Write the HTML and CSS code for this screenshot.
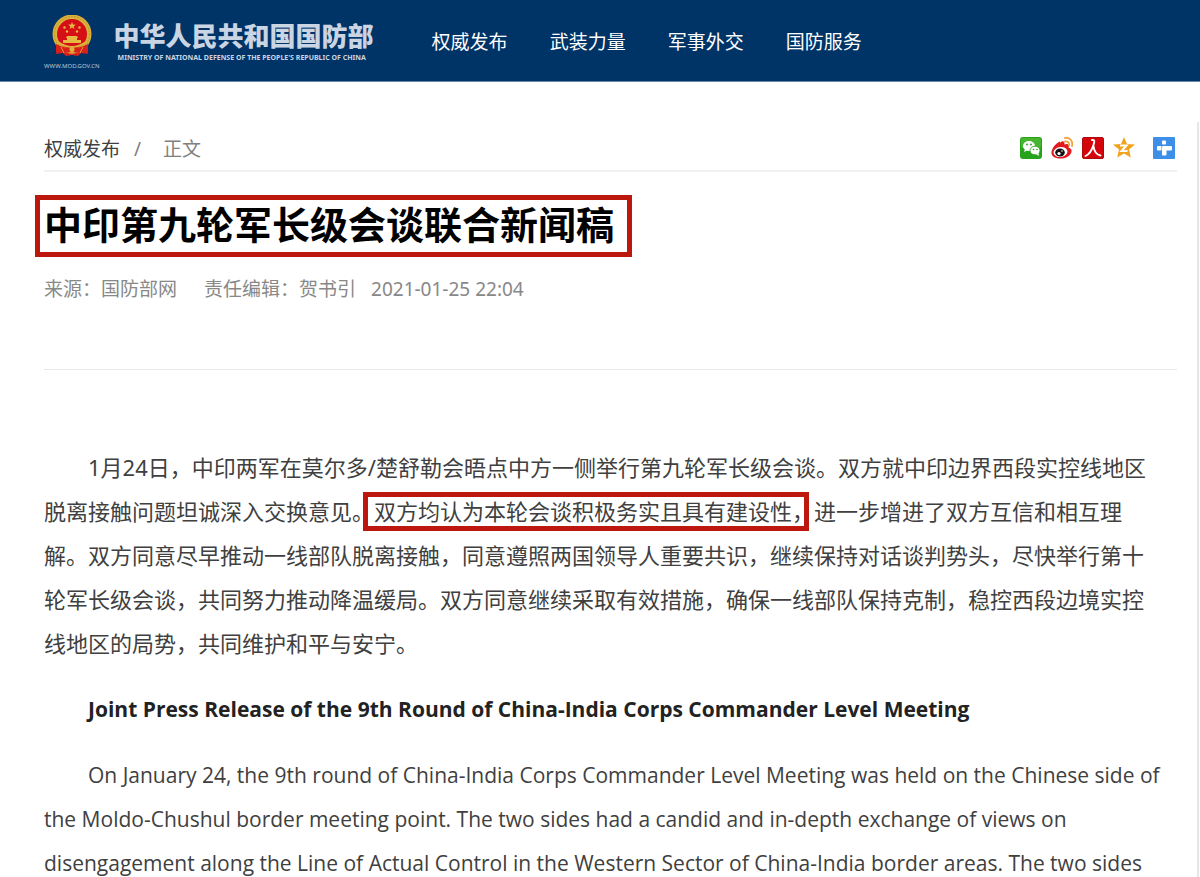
FILE: index.html
```html
<!DOCTYPE html>
<html lang="zh-CN">
<head>
<meta charset="UTF-8" />
<meta name="viewport" content="width=device-width, initial-scale=1" />
<title>中印第九轮军长级会谈联合新闻稿</title>
<link rel="stylesheet" href="styles.css">
</head>
<body>

<header class="site-header">
  <a class="brand" href="#">
    <span class="brand-emblem">
      <svg class="emblem" viewBox="0 0 40 42" aria-hidden="true">
        <path d="M6 29 L4 39 L11 38 L14 41 L20 40 L26 41 L29 38 L36 39 L34 29 Z" fill="#d8201c"/>
        <circle cx="20" cy="19" r="19.5" fill="#d9b13c"/>
        <circle cx="20" cy="19" r="17.5" fill="none" stroke="#c0962c" stroke-width="1" stroke-dasharray="2 1"/>
        <circle cx="20" cy="19" r="15" fill="#d60f16"/>
        <path d="M20 7 l1 2.600 2.800 .1 -2.200 1.700 .8 2.700 -2.400 -1.600 -2.400 1.600 .8 -2.700 -2.200 -1.700 2.800 -.1z" fill="#e8b845"/>
        <g fill="#e8b845">
          <circle cx="12.500" cy="12.500" r="1.200"/>
          <circle cx="27.500" cy="12.500" r="1.200"/>
          <circle cx="15" cy="16.500" r="1.200"/>
          <circle cx="25" cy="16.500" r="1.200"/>
          <path d="M15 21 h10 l1 2 h-1 v2 h4 v3 h-18 v-3 h4 v-2 h-1z"/>
        </g>
        <path d="M4 29 Q12 33 18 33 L20 32 L22 33 Q28 33 36 29 L36 37 Q26 38 20 37 Q14 38 4 37Z" fill="#d8201c"/>
        <path d="M6 27 Q13 32 20 32 Q27 32 34 27" fill="none" stroke="#e0b03c" stroke-width="2"/>
        <circle cx="20" cy="34.500" r="2.500" fill="#e2b33b"/>
        <path d="M9 32 l3 6 M31 32 l-3 6 M17 38 h6" stroke="#e2a034" stroke-width="1"/>
      </svg>
      <span class="brand-url">WWW.MOD.GOV.CN</span>
    </span>
    <span class="brand-name">
      <span class="brand-cn">中华人民共和国国防部</span>
      <span class="brand-en">MINISTRY OF NATIONAL DEFENSE OF THE PEOPLE'S REPUBLIC OF CHINA</span>
    </span>
  </a>
  <nav class="main-nav">
    <a href="#">权威发布</a>
    <a href="#">武装力量</a>
    <a href="#">军事外交</a>
    <a href="#">国防服务</a>
  </nav>
</header>

<main class="page">
  <div class="top-bar">
    <div class="breadcrumb">
      <a href="#">权威发布</a>
      <span class="slash">/</span>
      <span>正文</span>
    </div>

    <!-- Share buttons -->
    <div class="share">
      <a href="#" aria-label="微信">
        <svg viewBox="0 0 22 22">
          <rect width="22" height="22" rx="3" fill="#27a31b"/>
          <rect x="1" y="1" width="20" height="10" rx="2" fill="#47b52f"/>
          <ellipse cx="9" cy="9" rx="6" ry="5" fill="#fff"/>
          <path d="M5 12 l-1 3 4 -2z" fill="#fff"/>
          <ellipse cx="15" cy="13.500" rx="5" ry="4.300" fill="#fff" stroke="#27a31b" stroke-width=".8"/>
          <path d="M16 17 l3 2 -.5 -3z" fill="#fff"/>
          <g fill="#27a31b">
            <circle cx="7" cy="7.500" r=".9"/>
            <circle cx="11" cy="7.500" r=".9"/>
            <circle cx="13.500" cy="12.500" r=".8"/>
            <circle cx="17" cy="12.500" r=".8"/>
          </g>
        </svg>
      </a>
      <a href="#" aria-label="新浪微博">
        <svg viewBox="0 0 22 22">
          <path d="M9 6 C11 3 14 4 13.500 7.500 C17 6 19 8 17.500 10.500 C20 11.500 21 13 20.500 15 C19 20 13 22 8 21.500 C3 21 0 18.500 .5 15 C1 11 5 6 9 4.500 Z" fill="#e2191f"/>
          <ellipse cx="9.500" cy="15" rx="7" ry="5" fill="#fff" transform="rotate(-8 9.500 15)"/>
          <ellipse cx="9" cy="15.500" rx="4.800" ry="4" fill="#111"/>
          <circle cx="8" cy="16.500" r="1.600" fill="#fff"/>
          <circle cx="11" cy="14" r=".8" fill="#fff"/>
          <path d="M14 1 C19 0 22 4 21 9 M14 4.500 C17 4 18.500 6 18 8.500" fill="none" stroke="#f0a43a" stroke-width="1.800" stroke-linecap="round"/>
        </svg>
      </a>
      <a href="#" aria-label="人民微博">
        <svg viewBox="0 0 22 22">
          <rect x=".5" y=".5" width="21" height="21" rx="1.500" fill="#d5040b" stroke="#a90a0d"/>
          <path d="M10 3 C13 2.500 12.500 5 11.500 8 C10 13 8 17 3.500 19 M11.500 9 C12 14 14 17.500 18.500 18.500" fill="none" stroke="#fff" stroke-width="1.900" stroke-linecap="round"/>
        </svg>
      </a>
      <a href="#" aria-label="QQ空间">
        <svg viewBox="0 0 22 22">
          <path d="M11 0 L14 7 L22 7.500 L16 12.500 L17.800 20.500 L11 16.500 L4.200 20.500 L6 12.500 L0 7.500 L8 7 Z" fill="#f2a31d"/>
          <path d="M7 8.500 H13.500 L8.500 14 H14.500" fill="none" stroke="#fff" stroke-width="2"/>
        </svg>
      </a>
      <a class="share-more" href="#" aria-label="更多">
        <svg viewBox="0 0 22 22">
          <rect width="22" height="22" rx="1" fill="#3d8fe8"/>
          <rect x="9" y="3.500" width="4" height="4" rx="1" fill="#fff"/>
          <rect x="4" y="9" width="4.500" height="4.500" rx="1" fill="#fff"/>
          <path d="M10 9 h8 a1 1 0 0 1 1 1 v2.500 a1 1 0 0 1 -1 1 h-4.500 v4 a1 1 0 0 1 -1 1 h-2.500 a1 1 0 0 1 -1 -1 v-7.500 a1 1 0 0 1 1 -1z" fill="#fff"/>
        </svg>
      </a>
    </div>
  </div>

  <h1 class="title">中印第九轮军长级会谈联合新闻稿</h1>
  <div class="meta">
    <span class="source">来源：国防部网</span>
    <span class="editor">责任编辑：贺书引</span>
    <time datetime="2021-01-25T22:04">2021-01-25 22:04</time>
  </div>

  <article class="article">
    <p>1月24日，中印两军在莫尔多/楚舒勒会晤点中方一侧举行第九轮军长级会谈。双方就中印边界西段实控线地区脱离接触问题坦诚深入交换意见。<span class="marked">双方均认为本轮会谈积极务实且具有建设性，</span>进一步增进了双方互信和相互理解。双方同意尽早推动一线部队脱离接触，同意遵照两国领导人重要共识，继续保持对话谈判势头，尽快举行第十轮军长级会谈，共同努力推动降温缓局。双方同意继续采取有效措施，确保一线部队保持克制，稳控西段边境实控线地区的局势，共同维护和平与安宁。</p>
    <p class="en" lang="en"><strong>Joint Press Release of the 9th Round of China-India Corps Commander Level Meeting</strong></p>
    <p class="en" lang="en">On January 24, the 9th round of China-India Corps Commander Level Meeting was held on the Chinese side of the Moldo-Chushul border meeting point. The two sides had a candid and in-depth exchange of views on disengagement along the Line of Actual Control in the Western Sector of China-India border areas. The two sides</p>
  </article>
</main>

</body>
</html>
```

FILE: styles.css
```css
* {
  box-sizing: border-box;
}
body {
  margin: 0;
  font-family: "Noto Sans", "Noto Sans CJK SC", sans-serif;
  background: #fff;
  color: #404040;
}
a {
  color: inherit;
  text-decoration: none;
}

/* Header */
.site-header {
  display: flex;
  align-items: center;
  gap: 58px;
  height: 82px;
  padding: 0 44px;
  background: #003366;
  border-bottom: 1px solid #6685a8;
  color: #fff;
}
.brand {
  display: flex;
  gap: 14px;
  padding-top: 4px;
}
.brand-emblem {
  display: flex;
  flex-direction: column;
  align-items: center;
  color: #b9c8d8;
}
.emblem {
  width: 40px;
  height: 42px;
}
.brand-url {
  margin-top: 4px;
  font-size: 6px;
  line-height: 10px;
}
.brand-name {
  display: flex;
  flex-direction: column;
  padding-top: 4px;
  color: #c9d5e2;
}
.brand-cn {
  font-family: "Noto Sans CJK SC", sans-serif;
  font-size: 26px;
  font-weight: 900;
  line-height: 32px;
}
.brand-en {
  margin-top: 2px;
  padding-left: 4px;
  font-size: 7px;
  font-weight: 700;
  line-height: 10px;
  white-space: nowrap;
}
.main-nav {
  display: flex;
  gap: 42px;
  font-size: 19px;
}

/* Page column */
.page {
  margin: 40px 1px 0 0;
  padding: 0 20px 0 44px;
  border-right: 2px solid #e6e6e6;
}
.top-bar {
  display: flex;
  justify-content: space-between;
  align-items: center;
  height: 50px;
  padding: 3px 2px 0 0;
  border-bottom: 2px solid #f1f1f1;
}
.breadcrumb {
  display: flex;
  align-items: baseline;
  font-size: 19px;
  color: #808080;
}
.breadcrumb a {
  color: #404040;
}
.slash {
  margin: 0 22px 0 14px;
}
.share {
  display: flex;
  gap: 9px;
}
.share a,
.share svg {
  display: block;
  width: 22px;
  height: 22px;
}
.share-more {
  margin-left: 9px;
}

/* Title and source */
.title {
  width: fit-content;
  margin: 23px 0 0 -9px;
  padding: 0 13px 4px 4px;
  border: 5px solid #bc180d;
  font-size: 38px;
  line-height: 48px;
  color: #000;
}
.meta {
  display: flex;
  margin-top: 18px;
  padding-bottom: 66px;
  border-bottom: 1px solid #e8e8e8;
  font-size: 19px;
  line-height: 28px;
  color: #888;
}
.source {
  margin-right: 27px;
}
.editor {
  margin-right: 15px;
}

/* Article */
.article {
  padding-top: 75px;
  font-size: 22px;
  line-height: 44px;
}
.article p {
  margin: 0 0 22px;
  padding-right: 22px;
  text-indent: 44px;
}
.article .en {
  padding-right: 0;
  font-family: "Open Sans", "Noto Sans", sans-serif;
  font-size: 21px;
}
.article strong {
  color: #222;
}
.marked {
  position: relative;
}
.marked::after {
  content: "";
  position: absolute;
  inset: -4px 5px -5px -11px;
  border: 5px solid #bc180d;
}
```
